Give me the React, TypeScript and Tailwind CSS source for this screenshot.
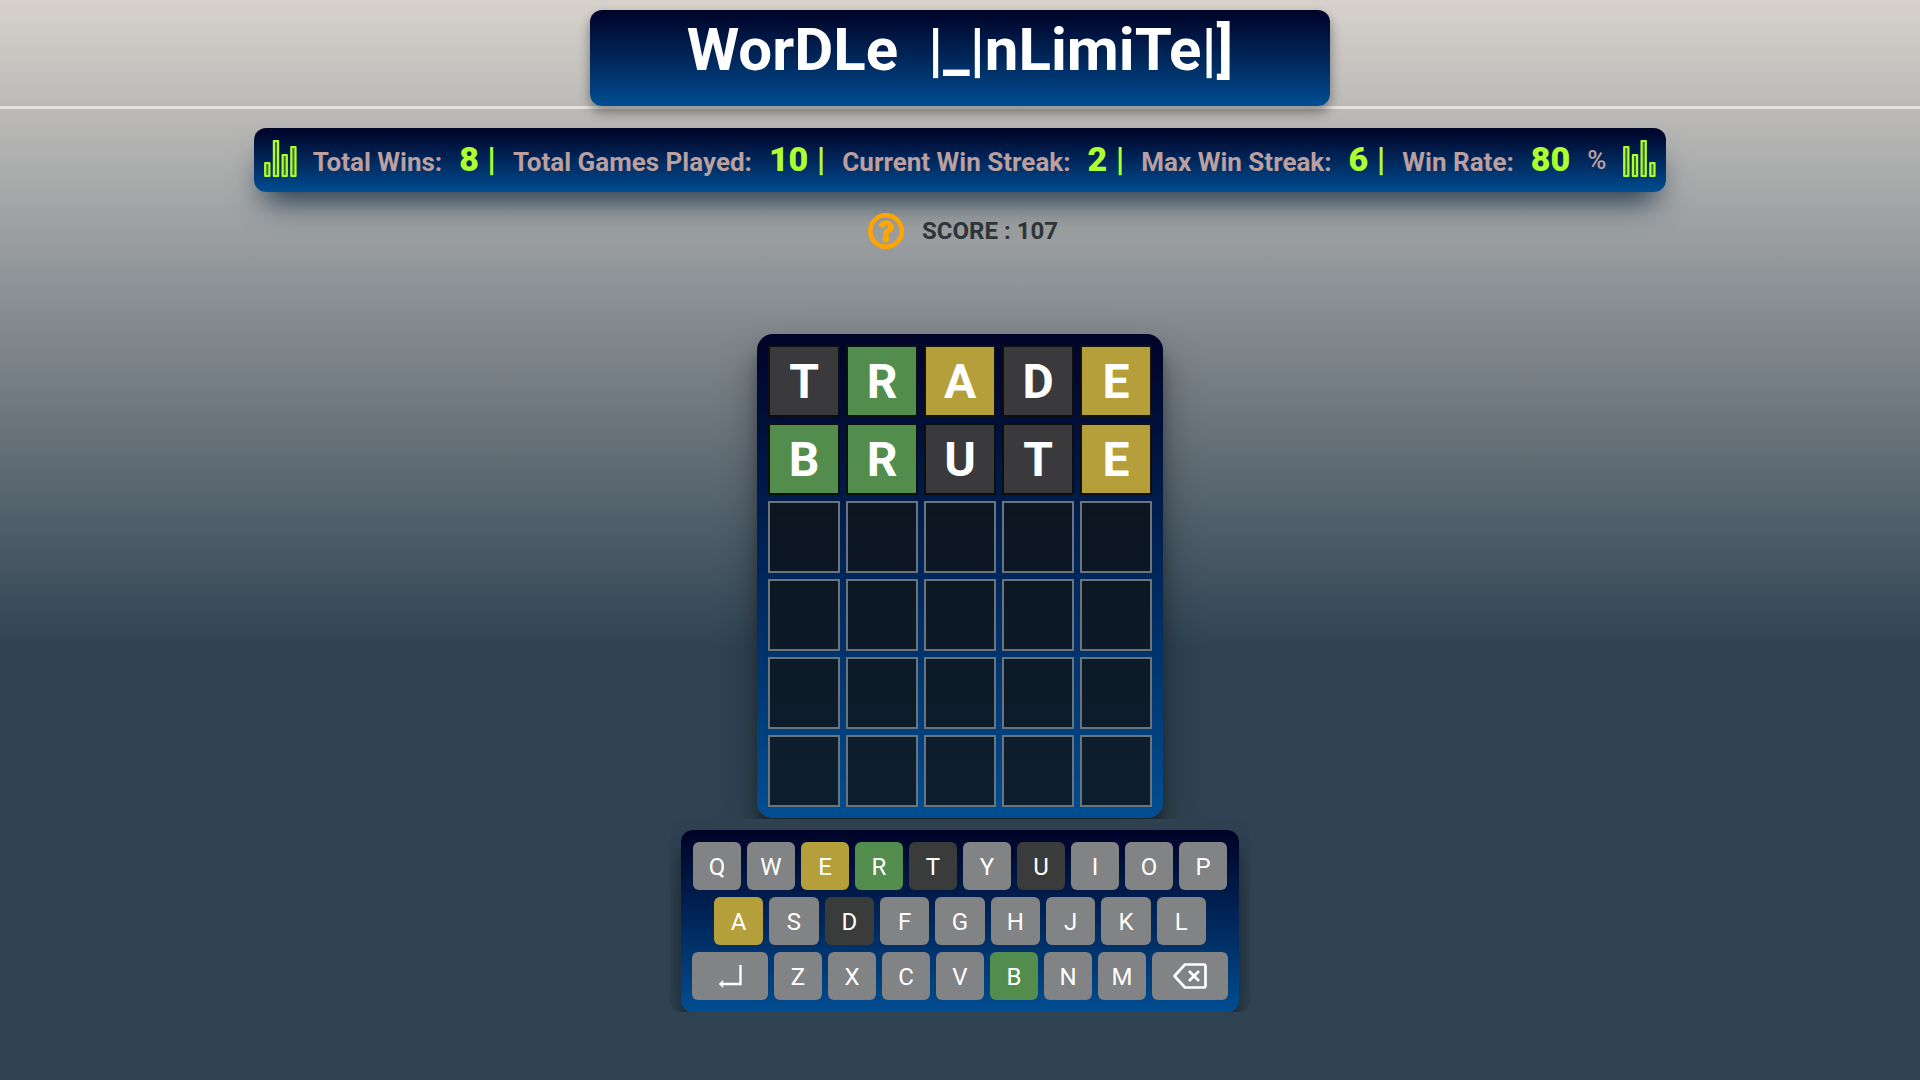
import React from "react";
import { FaRegQuestionCircle } from "react-icons/fa";

type State = "absent" | "present" | "correct" | "empty";

const tileStyles: Record<State, string> = {
  absent: "bg-[#3a3a3c] border-[#0d0e10]",
  present: "bg-[#b59f3b] border-[#12110d]",
  correct: "bg-[#538d4e] border-[#0d110e]",
  empty: "bg-[#101417]/80 border-[#6b737b]",
};

const keyStyles: Record<State, string> = {
  absent: "bg-[#3a3b3b]",
  present: "bg-[#b59f3b]",
  correct: "bg-[#538d4e]",
  empty: "bg-[#818384]",
};

const a: State = "absent";
const p: State = "present";
const c: State = "correct";

const guesses: { word: string; marks: State[] }[] = [
  { word: "TRADE", marks: [a, c, p, a, p] },
  { word: "BRUTE", marks: [c, c, a, a, p] },
];

const keyStates: Record<string, State> = { E: p, R: c, T: a, U: a, A: p, D: a, B: c };

const stats = [
  { label: "Total Wins:", value: "8" },
  { label: "Total Games Played:", value: "10" },
  { label: "Current Win Streak:", value: "2" },
  { label: "Max Win Streak:", value: "6" },
  { label: "Win Rate:", value: "80" },
];

function Bars({ heights }: { heights: number[] }) {
  return (
    <svg width="33" height="40" viewBox="0 0 33 40" fill="#436b34" stroke="#adff2f" strokeWidth="2.200" strokeLinejoin="round" aria-hidden="true">
      {heights.map((h, i) => (
        <rect key={i} x={1.2 + i * 8.7} y={36 - h} width="4.200" height={h} />
      ))}
    </svg>
  );
}

function Tile({ letter, state }: { letter: string; state: State }) {
  return (
    <div className={`flex size-[72px] items-center justify-center border-2 pt-0.5 text-5xl font-bold text-white ${tileStyles[state]}`}>
      {letter}
    </div>
  );
}

function Key({ letter, grow }: { letter: string; grow?: boolean }) {
  return (
    <button
      type="button"
      className={`h-12 rounded-md pt-0.5 text-2xl text-white ${grow ? "flex-1" : "w-12"} ${keyStyles[keyStates[letter] ?? "empty"]}`}
    >
      {letter}
    </button>
  );
}

export default function App() {
  return (
    <div className="flex min-h-screen flex-col items-center bg-[linear-gradient(to_bottom,#d7d2cc,#304352_60%)] font-['Roboto',sans-serif]">
      <header className="flex w-full justify-center border-b-3 border-[#e6e4e2] pt-[10px]">
        <h1 className="h-24 w-[740px] rounded-xl bg-linear-to-b from-[#000428] to-[#004e92] pt-1 text-center text-[60px] leading-[72px] font-bold whitespace-pre text-white shadow-[0_6px_12px_rgba(0,0,0,0.4)]">
          {"WorDLe  |_|nLimiTe|]"}
        </h1>
      </header>

      <section
        aria-label="Statistics"
        className="mt-[19px] flex h-16 items-center rounded-xl bg-linear-to-b from-[#000428] to-[#004e92] px-[10px] text-[26px] whitespace-nowrap shadow-[0_20px_30px_-10px_rgb(38,57,77)]"
      >
        <Bars heights={[13, 35, 21, 29]} />
        <dl className="flex gap-[17px] pl-4">
          {stats.map((s, i) => (
            <div key={s.label} className="flex items-baseline gap-[17px]">
              <dt className="font-bold text-[#bc9f9f]">{s.label}</dt>
              <dd className="text-[34px] leading-10 font-black text-[#adff2f]">
                {s.value}
                {i < stats.length - 1 && <span className="font-bold"> |</span>}
              </dd>
            </div>
          ))}
        </dl>
        <span className="mx-[17px] font-medium text-[#bc9f9f]">%</span>
        <Bars heights={[29, 21, 35, 13]} />
      </section>

      <div className="mt-[21px] flex items-center gap-[18px] pl-1.5">
        <button type="button" aria-label="How to play" className="text-[#ffa500]">
          <FaRegQuestionCircle size={36} stroke="currentColor" strokeWidth={16} />
        </button>
        <p className="text-2xl font-bold text-[#2f3436]">SCORE : 107</p>
      </div>

      <main className="flex flex-col items-center">
        <div className="overflow-hidden px-10 pt-[85px] pb-px">
          <div className="grid grid-cols-5 gap-1.5 rounded-2xl bg-linear-to-b from-[#000428] to-[#004e92] p-[11px] shadow-[0_19px_38px_rgba(0,0,0,0.35),0_15px_12px_rgba(0,0,0,0.22)]">
            {Array.from({ length: 6 }, (_, r) =>
              Array.from({ length: 5 }, (_, i) => (
                <Tile key={`${r}-${i}`} letter={guesses[r]?.word[i] ?? ""} state={guesses[r]?.marks[i] ?? "empty"} />
              )),
            )}
          </div>
        </div>

        <div className="overflow-hidden rounded-xl px-[11px] pt-[11px]">
          <div className="flex flex-col items-center gap-[7px] rounded-xl bg-linear-to-b from-[#000428] to-[#004e92] px-[11px] py-3 shadow-[0_19px_38px_rgba(0,0,0,0.3),0_15px_12px_rgba(0,0,0,0.22)]">
            <div className="flex gap-1.5">
              {[..."QWERTYUIOP"].map((l) => <Key key={l} letter={l} />)}
            </div>
            <div className="flex w-[492px] gap-1.5">
              {[..."ASDFGHJKL"].map((l) => <Key key={l} letter={l} grow />)}
            </div>
            <div className="flex gap-1.5">
              <button type="button" aria-label="Enter" className="flex h-12 w-[76px] items-center justify-center rounded-md bg-[#818384]">
                <svg width="24" height="24" viewBox="0 0 24 24" fill="none" stroke="white" strokeWidth="2.400" aria-hidden="true">
                  <path d="M22.500 1v19H4" />
                  <path d="M5 16.500v7l-4-3.500z" fill="white" strokeWidth="0.500" />
                </svg>
              </button>
              {[..."ZXCVBNM"].map((l) => <Key key={l} letter={l} />)}
              <button type="button" aria-label="Backspace" className="flex h-12 w-[76px] items-center justify-center rounded-md bg-[#818384]">
                <svg width="34" height="26" viewBox="0 0 34 26" fill="none" stroke="white" strokeWidth="2.700" strokeLinejoin="round" aria-hidden="true">
                  <path d="M12 1.500H30.500Q32.500 1.500 32.500 3.500V22.500Q32.500 24.500 30.500 24.500H12L1.500 13z" />
                  <path d="M16 8l10 10M26 8l-10 10" />
                </svg>
              </button>
            </div>
          </div>
        </div>
      </main>
    </div>
  );
}
